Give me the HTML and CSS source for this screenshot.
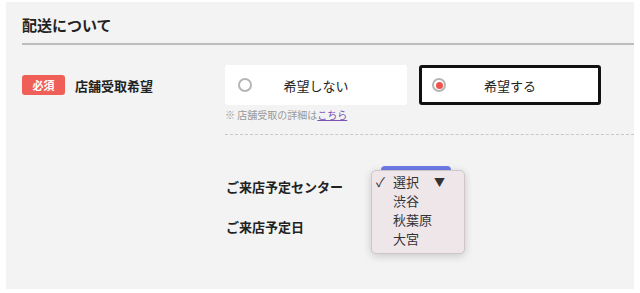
FILE: index.html
```html
<!DOCTYPE html>
<html lang="ja">
<head>
  <meta charset="UTF-8" />
  <title>配送について</title>
  <link rel="stylesheet" href="styles.css">
</head>
<body>
  <section class="panel">
    <h2 class="panel-title">配送について</h2>

    <div class="form-row">
      <div class="row-label">
        <span class="badge">必須</span>
        <span class="label-text">店舗受取希望</span>
      </div>
      <div class="row-body">
        <div class="choices">
          <label class="choice">
            <span class="radio"></span>
            <span class="choice-text">希望しない</span>
          </label>
          <label class="choice selected">
            <span class="radio checked"></span>
            <span class="choice-text">希望する</span>
          </label>
        </div>
        <p class="note">※ 店舗受取の詳細は<a href="#">こちら</a></p>
      </div>
    </div>

    <div class="sub-fields">
      <div class="field">
        <span class="field-label">ご来店予定センター</span>
        <div class="select-wrap">
          <div class="select"></div>
          <ul class="dropdown">
            <li class="current"><span class="check">✓</span>選択<span class="arrow">▼</span></li>
            <li>渋谷</li>
            <li>秋葉原</li>
            <li>大宮</li>
          </ul>
        </div>
      </div>
      <div class="field">
        <span class="field-label">ご来店予定日</span>
      </div>
    </div>
  </section>
</body>
</html>
```

FILE: styles.css
```css
body {
  margin: 0;
  background: #fff;
  font-family: "Noto Sans CJK JP", "Noto Sans", sans-serif;
  color: #222;
}
.panel {
  margin: 2px 6px 0;
  width: 628px;
  height: 287px;
  background: #f3f3f3;
  padding-left: 16px;
  box-sizing: border-box;
}
.panel-title {
  margin: 0;
  padding-top: 12px;
  height: 29px;
  line-height: 22px;
  font-size: 15px;
  font-weight: bold;
  border-bottom: 2px solid #bdbdbd;
}
.form-row {
  display: flex;
  margin-top: 20px;
}
.row-label {
  width: 203px;
  display: flex;
  align-items: center;
  height: 40px;
}
.badge {
  display: inline-block;
  width: 43px;
  height: 20px;
  line-height: 20px;
  text-align: center;
  background: #ef5f58;
  color: #fff;
  font-size: 11px;
  font-weight: bold;
  border-radius: 3px;
}
.label-text {
  margin-left: 10px;
  font-size: 13px;
  font-weight: bold;
}
.row-body {
  flex: 1;
}
.choices {
  display: flex;
  gap: 12px;
}
.choice {
  width: 182px;
  height: 40px;
  box-sizing: border-box;
  background: #fff;
  border-radius: 3px;
  display: flex;
  align-items: center;
  padding: 0 13px;
  font-size: 13px;
}
.choice.selected {
  border: 3px solid #111;
  padding: 0 10px;
}
.radio {
  width: 14px;
  height: 14px;
  box-sizing: border-box;
  border: 2px solid #b5b5b5;
  border-radius: 50%;
  display: flex;
  align-items: center;
  justify-content: center;
}
.radio.checked::after {
  content: "";
  width: 7px;
  height: 7px;
  border-radius: 50%;
  background: #f0514c;
}
.choice-text {
  flex: 1;
  text-align: center;
  margin-right: 14px;
}
.note {
  margin: 2px 0 0;
  font-size: 10px;
  color: #999;
  line-height: 16px;
  padding-bottom: 11px;
  border-bottom: 1px dashed #c8c8c8;
}
.note a {
  color: #7a55b5;
}
.sub-fields {
  margin-left: 204px;
  padding-top: 31px;
}
.field {
  display: flex;
  align-items: center;
  height: 40px;
}
.field-label {
  width: 155px;
  font-size: 13px;
  font-weight: bold;
}
.select-wrap {
  position: relative;
  align-self: flex-start;
}
.select {
  width: 70px;
  height: 24px;
  background: #6e7be8;
  border-radius: 4px;
}
.dropdown {
  position: absolute;
  top: 4px;
  left: -10px;
  width: 94px;
  height: 84px;
  box-sizing: border-box;
  margin: 0;
  padding: 1px 0 0 0;
  list-style: none;
  background: #efe6ea;
  border: 1px solid #cdc5c9;
  border-radius: 5px;
  box-shadow: 0 2px 8px rgba(0, 0, 0, 0.18);
  font-size: 13px;
  color: #333;
}
.dropdown li {
  height: 19px;
  line-height: 19px;
  padding-left: 21px;
  position: relative;
}
.check {
  position: absolute;
  left: 4px;
}
.arrow {
  margin-left: 15px;
  font-size: 11px;
}
```
